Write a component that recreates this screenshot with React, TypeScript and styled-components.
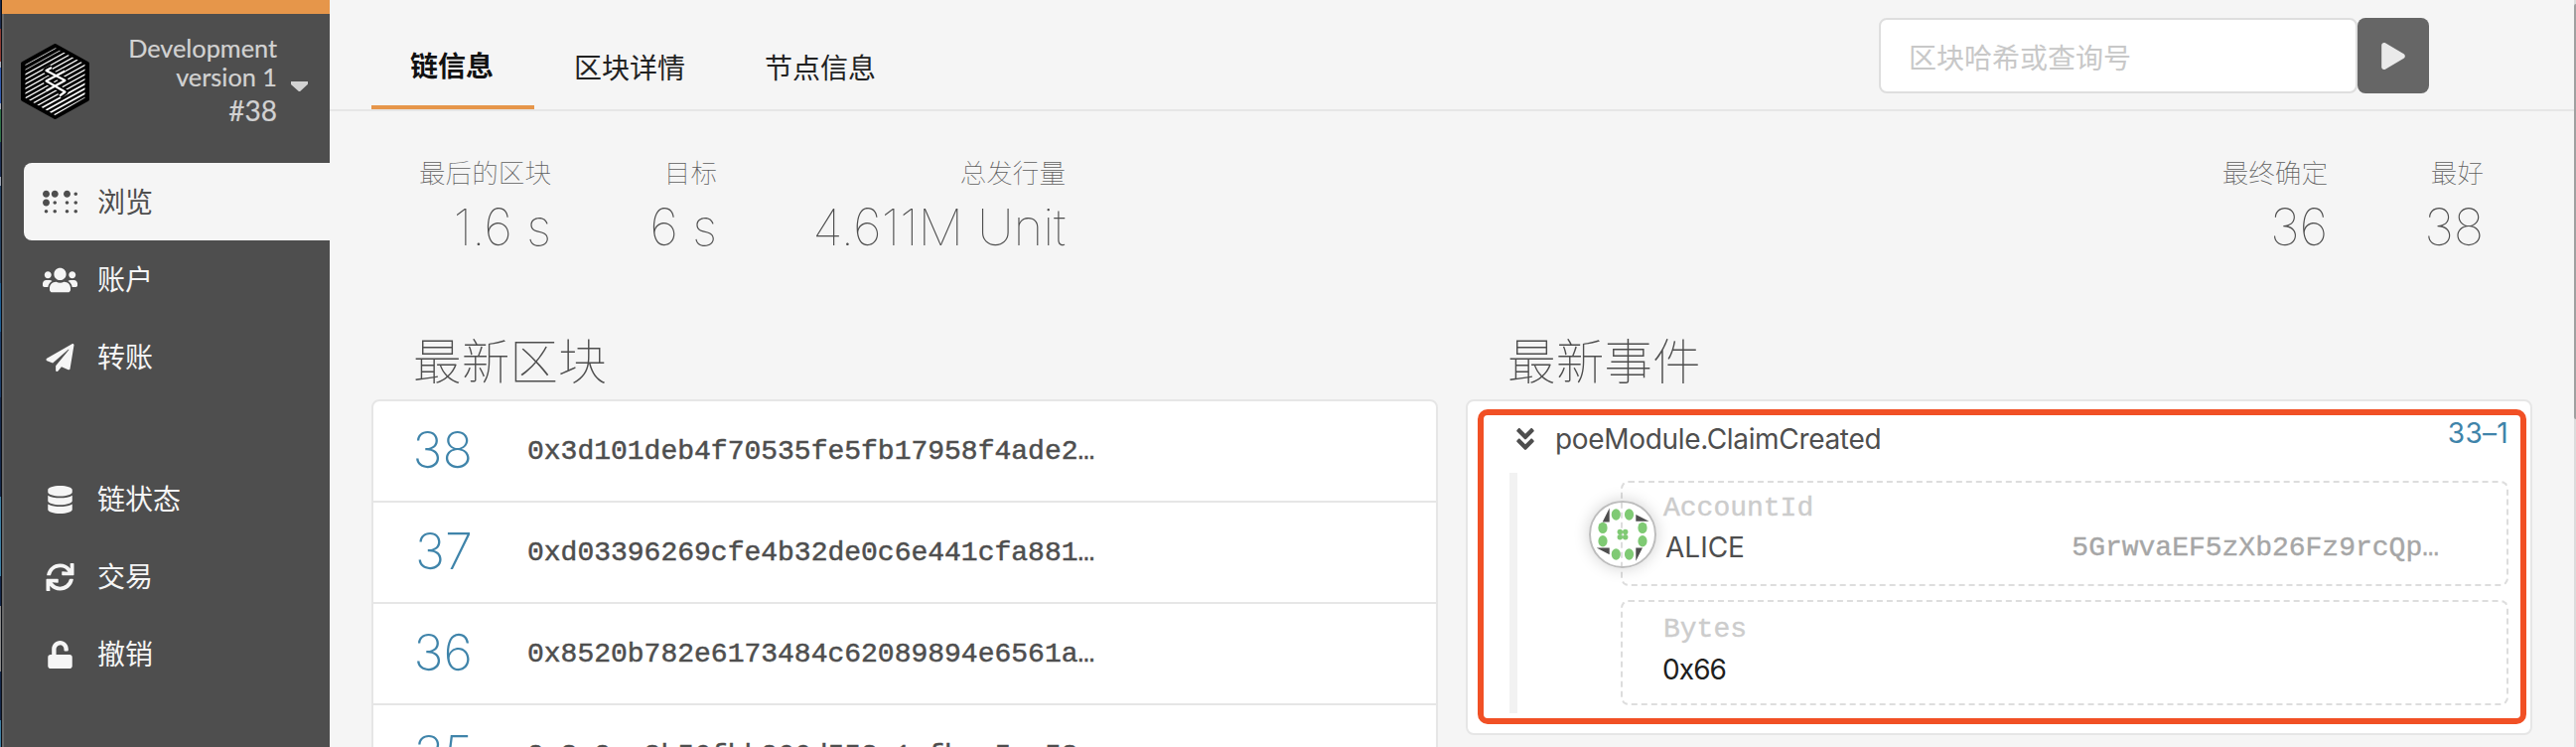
import React from 'react';
import styled, { createGlobalStyle } from 'styled-components';
import {
  FaAngleDoubleDown,
  FaBraille,
  FaCaretDown,
  FaDatabase,
  FaPaperPlane,
  FaPlay,
  FaSync,
  FaUnlock,
  FaUsers,
} from 'react-icons/fa';

const sans = `Inter, 'Noto Sans CJK SC', sans-serif`;
const mono = `'Liberation Mono', monospace`;
const accent = '#e6964a';
const link = '#3f84aa';
const line = '#e6e6e6';

const GlobalStyle = createGlobalStyle`
  * { box-sizing: border-box; }
  body {
    margin: 0;
    background: #f5f5f5;
    overflow: hidden;
    font-family: ${sans};
    font-size: 28px;
    line-height: 40px;
    color: #4e4e4e;
  }
`;

const Page = styled.div`
  display: flex;
  width: 2594px;
  height: 752px;
  overflow: hidden;
`;

const DesktopEdge = styled.div`
  width: 2px;
  border-right: 1px solid #0a0d14;
  background: linear-gradient(
    #1d2c4d 0 29px, #8e3b33 29px 62px, #a9b0bd 62px 68px, #3158a8 68px 104px,
    #a9b0bd 104px 110px, #2d7044 110px 143px, #1d2f52 143px 178px, #9aa3b2 178px 187px,
    #24405f 187px 285px, #1c5c92 285px 334px, #1c3d68 334px 400px, #14284a 400px 500px,
    #3d7fa3 500px 580px, #14284a 580px 610px, #8a8a8a 610px 676px, #14284a 676px 725px, #3d7fa3 725px
  );
`;

const Sidebar = styled.aside`
  display: flex;
  flex-direction: column;
  width: 330px;
  border-top: 14px solid ${accent};
  background: linear-gradient(90deg, #686868 0 2px, #4e4e4e 2px);
`;

const ChainInfo = styled.div`
  display: flex;
  flex-shrink: 0;
  height: 150px;
  padding: 19px 0 0 18px;
  color: #d2d2d2;
  font-family: Lato, sans-serif;
`;

const Logo = styled.svg`
  width: 72px;
  height: 80px;
  margin-top: 9px;
`;

const ChainText = styled.div`
  width: 187px;
  padding-top: 1px;
  text-align: right;
  font-size: 25.3px;
  line-height: 28.5px;
  -webkit-text-stroke: 0.2px currentColor;
`;

const BestNumber = styled.div`
  font-size: 28px;
  line-height: 41px;
`;

const Caret = styled(FaCaretDown)`
  width: 17px;
  height: 10px;
  margin: 49px 0 0 14px;
`;

const Nav = styled.nav`
  display: flex;
  flex-direction: column;
  flex-shrink: 0;
  padding-left: 22px;
`;

const NavGroup = styled.div`
  & + & {
    margin-top: 65px;
  }
`;

const NavItem = styled.a<{ $active?: boolean }>`
  display: flex;
  align-items: center;
  gap: 20px;
  height: 78px;
  padding: 1px 0 0 19px;
  border-radius: 8px 0 0 8px;
  color: ${(p) => (p.$active ? '#4e4e4e' : '#f5f5f5')};
  background: ${(p) => (p.$active ? '#f5f5f5' : 'transparent')};

  svg {
    width: 35px;
    height: 28px;
  }
`;

const Main = styled.main`
  flex: 1;
  min-width: 0;
`;

const Header = styled.header`
  display: flex;
  justify-content: space-between;
  height: 112px;
  padding: 0 146px 0 42px;
  border-bottom: 2px solid ${line};
`;

const Tabs = styled.div`
  display: flex;
`;

const Tab = styled.a<{ $active?: boolean }>`
  height: 110px;
  padding: ${(p) => (p.$active ? '47px 41px 0 39px' : '49px 40px 0 40px')};
  border-bottom: 4px solid ${(p) => (p.$active ? accent : 'transparent')};
  color: ${(p) => (p.$active ? '#111' : '#222')};
  font-weight: ${(p) => (p.$active ? 700 : 400)};
`;

const Search = styled.div`
  display: flex;
  align-items: flex-start;
  padding-top: 18px;
`;

const SearchBox = styled.div`
  width: 482px;
  height: 76px;
  padding: 19px 28px;
  border: 2px solid #dedede;
  border-radius: 8px;
  background: #fff;
  color: #c8c8c8;
`;

const SearchButton = styled.button`
  display: flex;
  align-items: center;
  justify-content: center;
  width: 72px;
  height: 76px;
  padding: 0;
  border: 0;
  border-radius: 8px;
  background: #666;
  color: #eaeaea;

  svg {
    width: 24px;
    height: 27px;
  }
`;

const Summary = styled.section`
  display: flex;
  justify-content: space-between;
  height: 222px;
  padding: 42px 91px 0 90px;
`;

const SummaryGroup = styled.div`
  display: flex;
`;

const Stat = styled.div<{ $width: number }>`
  width: ${(p) => p.$width}px;
  text-align: right;
  white-space: nowrap;
`;

const StatLabel = styled.div`
  font-size: 26.6px;
  font-weight: 100;
  color: #5e5e5e;
`;

const StatValue = styled.div`
  padding-top: 5px;
  font-size: 51px;
  line-height: 60px;
  font-weight: 130;
  letter-spacing: -0.2px;
  color: #4e4e4e;
`;

const Columns = styled.div`
  display: grid;
  grid-template-columns: 1fr 1fr;
  gap: 28px;
  padding: 0 42px;
`;

const Column = styled.section`
  min-width: 0;
`;

const Title = styled.h1`
  height: 68px;
  margin: 0;
  padding-left: 42px;
  font-size: 48.7px;
  line-height: 62px;
  font-weight: 100;
`;

const Card = styled.div`
  position: relative;
  border: 2px solid ${line};
  border-radius: 8px;
  background: #fff;
`;

const BlockRow = styled.div`
  display: flex;
  align-items: center;
  height: 102px;
  border-bottom: 2px solid ${line};
`;

const BlockNumber = styled.div`
  width: 100px;
  padding-bottom: 2px;
  text-align: right;
  font-size: 50.5px;
  font-weight: 150;
  color: ${link};
`;

const Hash = styled.div`
  padding: 2px 0 0 55px;
  font-family: ${mono};
  -webkit-text-stroke: 0.5px currentColor;
`;

const EventCard = styled(Card)`
  height: 338px;
  padding: 18px 22px 0 42px;
`;

const EventHead = styled.div`
  display: flex;
  height: 54px;
`;

const EventName = styled.div`
  flex: 1;
  padding-left: 21px;
  letter-spacing: -0.33px;
`;

const EventChevron = styled(FaAngleDoubleDown)`
  width: 18px;
  height: 28px;
  margin: 6px 0 0 7px;
`;

const EventId = styled.div`
  margin-top: -6px;
  letter-spacing: 0.3px;
  color: ${link};
`;

const Params = styled.div`
  display: flex;
  flex-direction: column;
  gap: 14px;
  height: 242px;
  padding: 8px 0 8px 104px;
  border-left: 8px solid #f2f2f2;
`;

const Param = styled.div<{ $plain?: boolean }>`
  position: relative;
  height: 106px;
  padding: ${(p) => (p.$plain ? 8 : 6)}px 68px 0 41px;
  border: 2px dashed #ddd;
  border-radius: 8px;
`;

const ParamType = styled.div`
  color: #ccc;
  font-family: ${mono};
  -webkit-text-stroke: 0.4px currentColor;
`;

const AccountName = styled.div`
  display: flex;
  justify-content: space-between;
  padding-left: 2px;
  line-height: 39px;
`;

const BytesValue = styled.div`
  color: #1e1e1e;
  line-height: 41px;
  letter-spacing: -0.9px;
  margin-left: -1px;
`;

const Address = styled.span`
  color: #a6a6a6;
  font-family: ${mono};
  -webkit-text-stroke: 0.4px currentColor;
`;

const Avatar = styled.div`
  position: absolute;
  left: -34px;
  top: 18px;
  width: 68px;
  height: 68px;
  border: 2px solid #bdbdbd;
  border-radius: 50%;
  box-shadow: 0 0 16px rgba(0, 0, 0, 0.18);

  svg {
    display: block;
    width: 64px;
    height: 64px;
  }
`;

const Highlight = styled.div`
  position: absolute;
  left: 10px;
  top: 8px;
  width: 1056px;
  height: 317px;
  border: 6px solid #f15025;
  border-radius: 10px;
`;

const Scrollbar = styled.div`
  width: 2px;
  padding-top: 4px;
  background: #dcdcdc;
`;

const Thumb = styled.div`
  height: 418px;
  border-radius: 2px 0 0 2px;
  background: #a0a0a0;
`;

const hatch = Array.from({ length: 20 }, (_, i) => i);

function ChainLogo() {
  return (
    <Logo viewBox="20 42 72 80">
      <defs>
        <clipPath id="hex">
          <path d="M55.5 48 85.5 64.5V98.5L55.5 116 25.5 98.5V64.5Z" />
        </clipPath>
      </defs>
      <path
        d="M55.5 46 88 64V100L55.5 118 23 100V64Z"
        fill="#000"
        stroke="#000"
        strokeWidth="4"
        strokeLinejoin="round"
      />
      <g clipPath="url(#hex)" stroke="#fff">
        {hatch.map((i) => (
          <path
            key={i}
            d={`M20 ${135 - i * 4.75}L95 ${93.5 - i * 4.75}`}
            strokeWidth={i < 4 ? 1.7 : i > 12 ? 0.8 : 1.2}
          />
        ))}
      </g>
      <g fill="none" strokeLinejoin="round">
        <path
          d="M52 68 46.5 71 65.5 81 46.5 91.5M65.5 71.5 46.5 81.5 65.5 92.5 60 96.5"
          stroke="#000"
          strokeWidth="6"
        />
        <path
          d="M52 68 46.5 71 65.5 81 46.5 91.5M65.5 71.5 46.5 81.5 65.5 92.5 60 96.5"
          stroke="#fff"
          strokeWidth="2.2"
        />
      </g>
    </Logo>
  );
}

const petals = [
  [-6.7, -20], [6.5, -20], [20, -6.6], [20, 6.8],
  [6.5, 20], [-6.7, 20], [-20, 6.8], [-20, -6.6],
];
const seeds = [[-2.7, -2.6], [2.7, -2.6], [-2.7, 2.8], [2.7, 2.8]];

function Identicon() {
  return (
    <Avatar>
      <svg viewBox="-32 -32 64 64">
        <g fill="#7fca74">
          {petals.map(([x, y]) => (
            <ellipse key={`${x},${y}`} cx={x} cy={y} rx="4.6" ry="5.7" />
          ))}
          {seeds.map(([x, y]) => (
            <circle key={`${x},${y}`} cx={x} cy={y} r="2.7" />
          ))}
        </g>
        <path
          fill="#4e4e4e"
          d="M-13.3-26.5V-12.6H-20.3ZM13.3-20 26.5-13.2H13.3ZM13.3 13.4H20L13.3 26.8ZM-26.3 13.4H-13.3V20.3Z"
        />
      </svg>
    </Avatar>
  );
}

const blocks = [
  ['38', '0x3d101deb4f70535fe5fb17958f4ade2…'],
  ['37', '0xd03396269cfe4b32de0c6e441cfa881…'],
  ['36', '0x8520b782e6173484c62089894e6561a…'],
  ['35', '0x3c0ae8b56fbb066d552e1afbac5ec58…'],
];

export default function App() {
  return (
    <Page>
      <GlobalStyle />
      <DesktopEdge />
      <Sidebar>
        <ChainInfo>
          <ChainLogo />
          <ChainText>
            Development
            <br />
            version 1
            <BestNumber>#38</BestNumber>
          </ChainText>
          <Caret preserveAspectRatio="none" viewBox="30 190 260 170" />
        </ChainInfo>
        <Nav>
          <NavGroup>
            <NavItem $active><FaBraille />浏览</NavItem>
            <NavItem><FaUsers />账户</NavItem>
            <NavItem><FaPaperPlane />转账</NavItem>
          </NavGroup>
          <NavGroup>
            <NavItem><FaDatabase />链状态</NavItem>
            <NavItem><FaSync />交易</NavItem>
            <NavItem><FaUnlock />撤销</NavItem>
          </NavGroup>
        </Nav>
      </Sidebar>
      <Main>
        <Header>
          <Tabs>
            <Tab $active>链信息</Tab>
            <Tab>区块详情</Tab>
            <Tab>节点信息</Tab>
          </Tabs>
          <Search>
            <SearchBox>区块哈希或查询号</SearchBox>
            <SearchButton><FaPlay /></SearchButton>
          </Search>
        </Header>
        <Summary>
          <SummaryGroup>
            <Stat $width={133}><StatLabel>最后的区块</StatLabel><StatValue>1.6 s</StatValue></Stat>
            <Stat $width={167}><StatLabel>目标</StatLabel><StatValue>6 s</StatValue></Stat>
            <Stat $width={351}><StatLabel>总发行量</StatLabel><StatValue>4.611M Unit</StatValue></Stat>
          </SummaryGroup>
          <SummaryGroup>
            <Stat $width={110}><StatLabel>最终确定</StatLabel><StatValue>36</StatValue></Stat>
            <Stat $width={157}><StatLabel>最好</StatLabel><StatValue>38</StatValue></Stat>
          </SummaryGroup>
        </Summary>
        <Columns>
          <Column>
            <Title>最新区块</Title>
            <Card>
              {blocks.map(([number, hash]) => (
                <BlockRow key={number}>
                  <BlockNumber>{number}</BlockNumber>
                  <Hash>{hash}</Hash>
                </BlockRow>
              ))}
            </Card>
          </Column>
          <Column>
            <Title>最新事件</Title>
            <EventCard>
              <EventHead>
                <EventChevron />
                <EventName>poeModule.ClaimCreated</EventName>
                <EventId>33–1</EventId>
              </EventHead>
              <Params>
                <Param>
                  <ParamType>AccountId</ParamType>
                  <AccountName>
                    ALICE
                    <Address>5GrwvaEF5zXb26Fz9rcQp…</Address>
                  </AccountName>
                  <Identicon />
                </Param>
                <Param $plain>
                  <ParamType>Bytes</ParamType>
                  <BytesValue>0x66</BytesValue>
                </Param>
              </Params>
              <Highlight />
            </EventCard>
          </Column>
        </Columns>
      </Main>
      <Scrollbar><Thumb /></Scrollbar>
    </Page>
  );
}
